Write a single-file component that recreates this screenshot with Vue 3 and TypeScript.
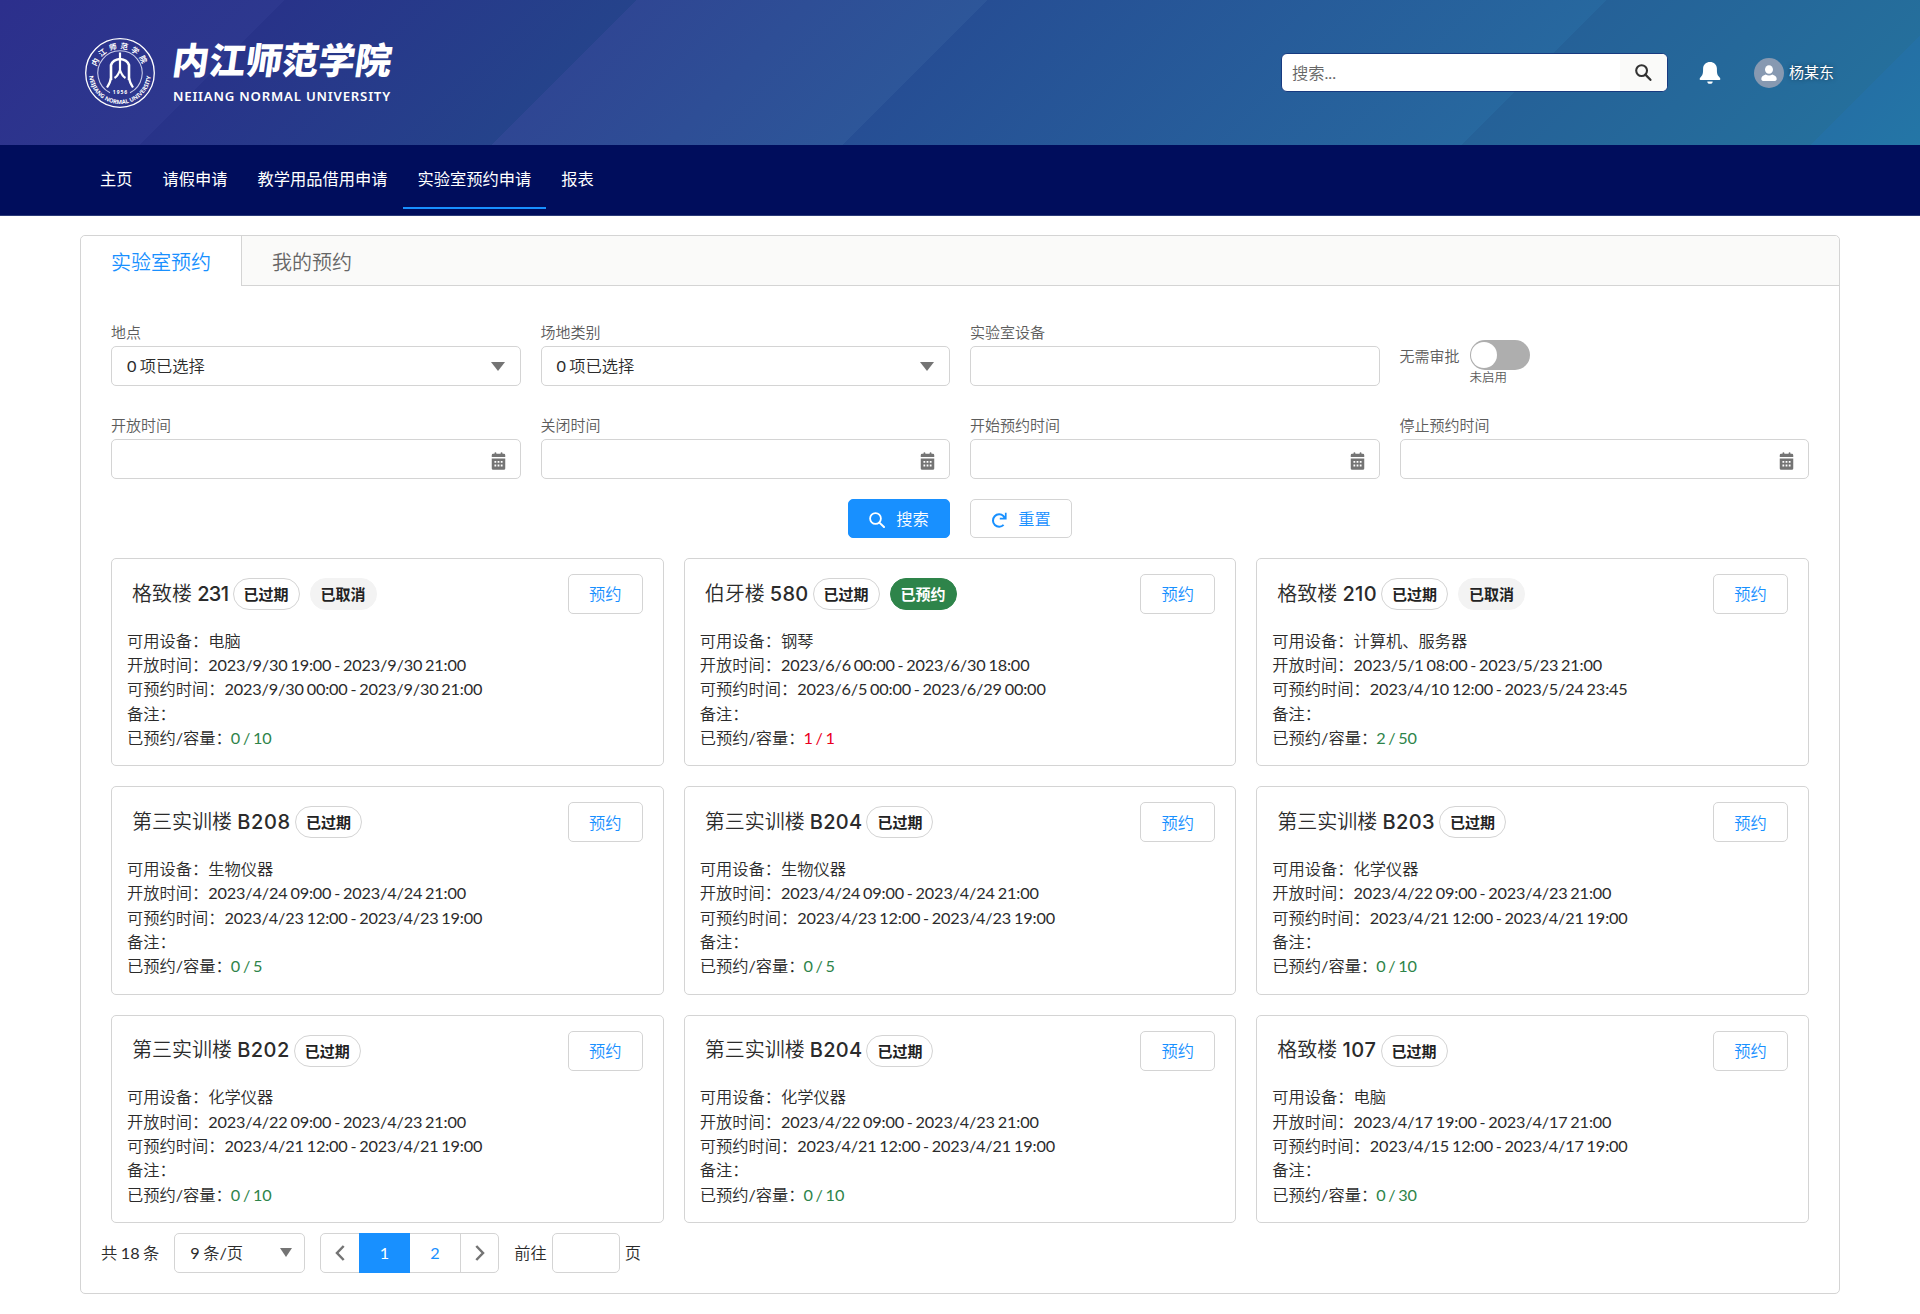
<script setup lang="ts">
import { ref } from 'vue'

interface Room {
  building: string
  no: string
  track: number
  status?: 'cancelled' | 'booked'
  device: string
  open: string
  book: string
  used: number
  cap: number
}

const navItems = ['主页', '请假申请', '教学用品借用申请', '实验室预约申请', '报表']
const activeNav = ref(3)
const dateFields = ['开放时间', '关闭时间', '开始预约时间', '停止预约时间']

const rooms: Room[] = [
  { building: '格致楼', no: '231', track: -0.6, status: 'cancelled', device: '电脑', open: '2023/9/30 19:00 - 2023/9/30 21:00', book: '2023/9/30 00:00 - 2023/9/30 21:00', used: 0, cap: 10 },
  { building: '伯牙楼', no: '580', track: 0.3, status: 'booked', device: '钢琴', open: '2023/6/6 00:00 - 2023/6/30 18:00', book: '2023/6/5 00:00 - 2023/6/29 00:00', used: 1, cap: 1 },
  { building: '格致楼', no: '210', track: 0.3, status: 'cancelled', device: '计算机、服务器', open: '2023/5/1 08:00 - 2023/5/23 21:00', book: '2023/4/10 12:00 - 2023/5/24 23:45', used: 2, cap: 50 },
  { building: '第三实训楼', no: 'B208', track: 0.7, device: '生物仪器', open: '2023/4/24 09:00 - 2023/4/24 21:00', book: '2023/4/23 12:00 - 2023/4/23 19:00', used: 0, cap: 5 },
  { building: '第三实训楼', no: 'B204', track: 0.3, device: '生物仪器', open: '2023/4/24 09:00 - 2023/4/24 21:00', book: '2023/4/23 12:00 - 2023/4/23 19:00', used: 0, cap: 5 },
  { building: '第三实训楼', no: 'B203', track: 0.4, device: '化学仪器', open: '2023/4/22 09:00 - 2023/4/23 21:00', book: '2023/4/21 12:00 - 2023/4/21 19:00', used: 0, cap: 10 },
  { building: '第三实训楼', no: 'B202', track: 0.5, device: '化学仪器', open: '2023/4/22 09:00 - 2023/4/23 21:00', book: '2023/4/21 12:00 - 2023/4/21 19:00', used: 0, cap: 10 },
  { building: '第三实训楼', no: 'B204', track: 0.3, device: '化学仪器', open: '2023/4/22 09:00 - 2023/4/23 21:00', book: '2023/4/21 12:00 - 2023/4/21 19:00', used: 0, cap: 10 },
  { building: '格致楼', no: '107', track: 0.6, device: '电脑', open: '2023/4/17 19:00 - 2023/4/17 21:00', book: '2023/4/15 12:00 - 2023/4/17 19:00', used: 0, cap: 30 },
]
</script>

<template>
  <div class="page">
    <header class="banner">
      <div class="brand">
        <svg class="seal" viewBox="0 0 72 72">
          <defs>
            <path id="sealTop" d="M 11.8 36 A 24.2 24.2 0 0 1 60.2 36" />
            <path id="sealBottom" d="M 5.400 31 A 31 31 0 1 0 66.600 31" />
          </defs>
          <circle cx="36" cy="36" r="34.3" fill="none" stroke="#fff" stroke-width="1.3" />
          <path d="M26 55.800 A22.200 22.200 0 1 1 46 55.800" fill="none" stroke="#c8cbea" stroke-width="1.1" />
          <path d="M27 43 V28 Q29 22.500 36 22 Q43 22.500 45 28 V43" fill="none" stroke="#fff" stroke-width="2.600" />
          <path d="M27 41 Q26.500 45 23 50.500 M45 41 Q45.500 45 49 50.500 M36 15.500 V35 M36 33 Q34 39 30.500 41 M36 33 Q38 39 41.500 41" fill="none" stroke="#fff" stroke-width="2.200" />
          <text class="seal-cn"><textPath href="#sealTop" startOffset="50%" text-anchor="middle">内江师范学院</textPath></text>
          <text class="seal-en"><textPath href="#sealBottom" startOffset="50%" text-anchor="middle">NEIJIANG NORMAL UNIVERSITY</textPath></text>
          <text class="seal-year" x="36.500" y="57" text-anchor="middle">1956</text>
        </svg>
        <div class="brand-text">
          <div class="brand-cn">内江师范学院</div>
          <div class="brand-en">NEIIANG NORMAL UNIVERSITY</div>
        </div>
      </div>
      <div class="tools">
        <div class="global-search">
          <span class="placeholder">搜索...</span>
          <button class="search-btn" aria-label="搜索">
            <svg viewBox="0 0 20 20" width="19" height="19"><circle cx="8" cy="8" r="5.700" fill="none" stroke="#333" stroke-width="2.200" /><path d="M12 12.200 L17.300 17.700" stroke="#333" stroke-width="2.400" stroke-linecap="round" /></svg>
          </button>
        </div>
        <svg class="bell" viewBox="0 0 22 22" width="22" height="22" fill="#fff">
          <path d="M11 0C7.200 0 4.300 2.600 4.100 6.500 4 10.500 4.200 12.500 1.800 15 .3 16.200.3 18 1.600 18h18.800c1.300 0 1.300-1.800-.2-3-2.400-2.500-2.200-4.500-2.300-8.500C17.700 2.600 14.800 0 11 0Z" /><path d="M8.300 19.400h5.400a2.700 2.400 0 0 1-5.400 0Z" />
        </svg>
        <div class="user">
          <svg viewBox="0 0 30 30" width="30" height="30"><circle cx="15" cy="15" r="15" fill="#8799b1" /><ellipse cx="15" cy="11.500" rx="4" ry="4.300" fill="#fff" /><path d="M7.300 20.800c0-2.400 2.200-3.600 4.400-4.300 2 1.200 4.600 1.200 6.600 0 2.200.7 4.400 1.900 4.400 4.300 0 1.300-.6 2.200-1.800 2.200H9.100c-1.200 0-1.800-.9-1.800-2.200Z" fill="#fff" /></svg>
          <span>杨某东</span>
        </div>
      </div>
    </header>

    <nav class="nav">
      <a v-for="(item, i) in navItems" :key="item" :class="{ active: i === activeNav }" @click="activeNav = i">{{ item }}</a>
    </nav>

    <main class="panel">
      <div class="tabs">
        <div class="tab active">实验室预约</div>
        <div class="tab">我的预约</div>
      </div>
      <div class="body">
        <div class="filters">
          <div v-for="label in ['地点', '场地类别']" :key="label" class="field">
            <label>{{ label }}</label>
            <div class="control"><span>0 项已选择</span><i class="caret" /></div>
          </div>
          <div class="field">
            <label>实验室设备</label>
            <div class="control" />
          </div>
          <div class="toggle-field">
            <label>无需审批</label>
            <div class="toggle-wrap">
              <div class="toggle"><i /></div>
              <small>未启用</small>
            </div>
          </div>
          <div v-for="label in dateFields" :key="label" class="field">
            <label>{{ label }}</label>
            <div class="control date">
              <svg viewBox="0 0 16 20" width="15" height="18" fill="#747474">
                <path d="M2 2h1.600V1.200a1 1 0 0 1 2 0V2h4.800v-.8a1 1 0 0 1 2 0V2H14a1.500 1.500 0 0 1 1.500 1.500V5.500H.5V3.500A1.500 1.500 0 0 1 2 2Z" />
                <path fill-rule="evenodd" d="M.5 7.300h15v11a1.500 1.500 0 0 1-1.500 1.500H2a1.500 1.500 0 0 1-1.500-1.500ZM3.500 10v2h2v-2Zm3.500 0v2h2v-2Zm3.500 0v2h2v-2ZM3.500 14v2h2v-2Zm3.500 0v2h2v-2Zm3.500 0v2h2v-2Z" />
              </svg>
            </div>
          </div>
        </div>

        <div class="actions">
          <button class="btn primary">
            <svg viewBox="0 0 16 16" width="16" height="16"><circle cx="6.500" cy="6.500" r="5.400" fill="none" stroke="#fff" stroke-width="1.800" /><path d="M10.400 10.600 L15 15" stroke="#fff" stroke-width="2" stroke-linecap="round" /></svg>
            搜索
          </button>
          <button class="btn">
            <svg viewBox="0 0 16 16" width="16" height="16" fill="none" stroke="#1890ff" stroke-width="2"><path d="M12.600 12.900 A6.200 6.200 0 1 1 12.400 4 L13.500 5.500" /><path d="M15.600 .8 V7.600 H8.800 V5.800 H12 L13.900 4 V.8 Z" fill="#1890ff" stroke="none" /></svg>
            重置
          </button>
        </div>

        <div class="cards">
          <section v-for="(room, i) in rooms" :key="i" class="card">
            <div class="card-head">
              <h3>{{ room.building }} <b :style="{ letterSpacing: room.track + 'px' }">{{ room.no }}</b></h3>
              <span class="pill">已过期</span>
              <span v-if="room.status" class="pill" :class="room.status">{{ room.status === 'booked' ? '已预约' : '已取消' }}</span>
              <button class="btn reserve">预约</button>
            </div>
            <div class="info">
              <p>可用设备：{{ room.device }}</p>
              <p>开放时间：<span class="value">{{ room.open }}</span></p>
              <p>可预约时间：<span class="value">{{ room.book }}</span></p>
              <p>备注：</p>
              <p>已预约/容量：<span class="value count" :class="room.used < room.cap ? 'free' : 'full'">{{ room.used }} / {{ room.cap }}</span></p>
            </div>
          </section>
        </div>

        <div class="pagination">
          <span class="total">共 18 条</span>
          <div class="page-size"><span>9 条/页</span><i class="caret" /></div>
          <div class="pager">
            <span class="arrow"><svg viewBox="0 0 10 16" width="10" height="16"><path d="M8.700 1 L2 8 L8.700 15" /></svg></span>
            <span class="num current">1</span>
            <span class="num">2</span>
            <span class="arrow next"><svg viewBox="0 0 10 16" width="10" height="16"><path d="M1.300 1 L8 8 L1.300 15" /></svg></span>
          </div>
          <span class="goto">前往</span>
          <div class="goto-input" />
          <span>页</span>
        </div>
      </div>
    </main>
  </div>
</template>

<style>
body {
  background: #fff;
}
</style>

<style scoped>
* {
  box-sizing: border-box;
}
.page {
  height: 1314px;
  overflow: hidden;
  color: #2b2b2b;
  font: 400 16.25px/24.375px Lato, 'Noto Sans CJK SC DemiLight', 'Noto Sans CJK SC Light', 'Noto Sans CJK SC', sans-serif;
}
button {
  font: inherit;
}
.banner {
  height: 145px;
  display: flex;
  justify-content: space-between;
  padding: 0 86px 0 84px;
  background: linear-gradient(135deg, #2c2f8c 0, #2d388e 13.8%, #283389 13.800%, #25438b 30.800%, #2f4693 30.800%, #2d5699 47.840%, #264e94 47.840%, #27689f 77.820%, #256198 77.820%, #256f9c 94.720%, #2470a5 94.720%, #2476a6 100%);
}
.brand {
  display: flex;
  align-items: flex-start;
  padding-top: 37px;
}
.seal {
  width: 72px;
  height: 72px;
}
.seal text {
  fill: #fff;
  font-weight: 700;
}
.seal-cn {
  font-family: 'Noto Sans CJK SC', sans-serif;
  font-size: 7.500px;
  letter-spacing: 3px;
}
.seal-en {
  font-family: 'Noto Sans', sans-serif;
  font-size: 5.800px;
  letter-spacing: 0;
}
.seal-year {
  font-family: 'Noto Sans', sans-serif;
  font-size: 5px;
  letter-spacing: 1px;
}
.brand-text {
  margin-left: 17px;
  color: #fff;
  white-space: nowrap;
}
.brand-cn {
  height: 44px;
  font: 900 36.500px/44px 'Noto Sans CJK SC', sans-serif;
  transform: skewX(-8deg);
}
.brand-en {
  margin-top: 6px;
  font: 600 13.200px/18px 'Noto Sans', sans-serif;
  letter-spacing: 0.800px;
}
.tools {
  display: flex;
  align-items: center;
}
.global-search {
  width: 387px;
  height: 39px;
  display: flex;
  border: 1px solid #173a80;
  border-radius: 6px;
  background: #fff;
  overflow: hidden;
}
.placeholder {
  flex: 1;
  padding-left: 10px;
  line-height: 38px;
  color: #666;
}
.search-btn {
  width: 47px;
  border: 0;
  padding: 0;
  background: #fafaf9;
  display: flex;
  align-items: center;
  justify-content: center;
}
.bell {
  margin-left: 31px;
}
.user {
  display: flex;
  align-items: center;
  gap: 5px;
  margin-left: 33px;
  color: #fff;
  font-family: Lato, 'Noto Sans CJK SC', sans-serif;
  font-size: 15px;
  text-shadow: 0 0 4px rgba(0, 0, 0, 0.5);
}
.nav {
  height: 71px;
  display: flex;
  padding-left: 85px;
  font-family: Lato, 'Noto Sans CJK SC', sans-serif;
  background: #000d5c;
  border-bottom: 1px solid #2b3a78;
}
.nav a {
  height: 64px;
  padding: 0 15px;
  line-height: 68px;
  color: #fff;
}
.nav a.active {
  border-bottom: 2px solid #1890ff;
}
.panel {
  margin: 19px 80px 0;
  height: 1059px;
  border: 1px solid #d4d4d4;
  border-radius: 5px;
}
.tabs {
  height: 50px;
  display: flex;
  background: #fafaf9;
  border-bottom: 1px solid #d4d4d4;
  border-radius: 5px 5px 0 0;
}
.tab {
  height: 50px;
  padding: 0 30px;
  font-size: 20px;
  line-height: 52px;
  color: #666;
}
.tab.active {
  background: #fff;
  color: #1890ff;
  border-right: 1px solid #d4d4d4;
  border-radius: 5px 0 0 0;
}
.body {
  padding: 36px 30px 0;
}
.filters {
  display: grid;
  grid-template-columns: repeat(4, 1fr);
  column-gap: 20px;
  row-gap: 29px;
}
.field label {
  display: block;
  height: 24px;
  font-size: 15px;
  line-height: 20px;
  color: #5c5c5c;
}
.control {
  height: 40px;
  display: flex;
  justify-content: space-between;
  align-items: center;
  padding: 0 15px;
  border: 1px solid #d4d4d4;
  border-radius: 5px;
  word-spacing: -0.800px;
}
.control.date {
  justify-content: flex-end;
  padding-top: 3px;
  padding-right: 14px;
}
.caret {
  border: 7.500px solid transparent;
  border-top: 9px solid #747474;
  border-bottom: 0;
}
.toggle-field {
  display: flex;
  padding-top: 18px;
  color: #5c5c5c;
  font-size: 15px;
}
.toggle-field label {
  line-height: 32px;
}
.toggle-wrap {
  margin-left: 10px;
}
.toggle {
  width: 60px;
  height: 30px;
  border-radius: 15px;
  background: #aeaeae;
  padding: 2px 1.500px;
}
.toggle i {
  display: block;
  width: 26px;
  height: 26px;
  border-radius: 50%;
  background: #fff;
}
.toggle-wrap small {
  display: block;
  height: 16px;
  line-height: 16px;
  font-size: 12.500px;
}
.actions {
  display: flex;
  justify-content: center;
  gap: 20px;
  margin-top: 20px;
}
.btn {
  width: 102px;
  height: 39px;
  display: flex;
  align-items: center;
  justify-content: center;
  gap: 11px;
  padding: 1px 0 0;
  border: 1px solid #d4d4d4;
  border-radius: 5px;
  background: #fff;
  color: #1890ff;
}
.btn svg {
  margin-top: 2px;
}
.btn.primary {
  background: #1890ff;
  border-color: #1890ff;
  color: #fff;
}
.cards {
  display: grid;
  grid-template-columns: repeat(3, 1fr);
  gap: 20px;
  margin-top: 20px;
}
.card {
  height: 208.300px;
  padding: 15px 20px 0 15px;
  border: 1px solid #d4d4d4;
  border-radius: 5px;
}
.card-head {
  display: flex;
  align-items: center;
  height: 40px;
  padding-left: 5px;
}
h3 {
  margin: 0 4px 2px 0;
  font-size: 20px;
  font-weight: 400;
  line-height: 30px;
  white-space: nowrap;
}
h3 b {
  font-family: Inter, sans-serif;
  font-weight: 500;
}
.pill {
  height: 32px;
  width: 67px;
  text-align: center;
  border: 1px solid #d4d4d4;
  border-radius: 16px;
  font-family: Lato, 'Noto Sans CJK SC', sans-serif;
  font-size: 15px;
  font-weight: 700;
  line-height: 30px;
  color: #222;
}
.pill + .pill {
  margin-left: 10px;
}
.pill.cancelled {
  background: #f3f3f3;
  border-color: #f3f3f3;
}
.pill.booked {
  background: #2e844a;
  border-color: #2e844a;
  color: #fff;
}
.btn.reserve {
  width: 75px;
  height: 40px;
  margin-left: auto;
}
.info {
  margin-top: 14.700px;
}
.info p {
  margin: 0;
}
.value {
  letter-spacing: -0.150px;
  word-spacing: -1.200px;
}
.count {
  margin-left: -1px;
}
.free {
  color: #2e844a;
}
.full {
  color: #ea001e;
}
.pagination {
  display: flex;
  align-items: center;
  height: 40px;
  margin: 10px 0 0 -10px;
  word-spacing: -0.700px;
}
.page-size {
  width: 131px;
  height: 40px;
  display: flex;
  align-items: center;
  justify-content: space-between;
  margin-left: 15px;
  padding: 0 12px 0 15px;
  border: 1px solid #d4d4d4;
  border-radius: 5px;
}
.page-size .caret {
  border-left-width: 6.500px;
  border-right-width: 6.500px;
}
.pager {
  display: flex;
  width: 179px;
  height: 40px;
  margin-left: 15px;
  border: 1px solid #d4d4d4;
  border-radius: 5px;
}
.arrow {
  width: 38px;
  display: flex;
  align-items: center;
  justify-content: center;
}
.arrow path {
  fill: none;
  stroke: #747474;
  stroke-width: 2.500px;
}
.arrow.next {
  border-left: 1px solid #d4d4d4;
}
.num {
  width: 50.500px;
  line-height: 37px;
  text-align: center;
  color: #1890ff;
}
.num.current {
  margin: -1px 0;
  line-height: 39px;
  background: #1890ff;
  color: #fff;
}
.goto {
  margin-left: 15px;
}
.goto-input {
  width: 68px;
  height: 40px;
  margin: 0 5px;
  border: 1px solid #d4d4d4;
  border-radius: 5px;
}
</style>
